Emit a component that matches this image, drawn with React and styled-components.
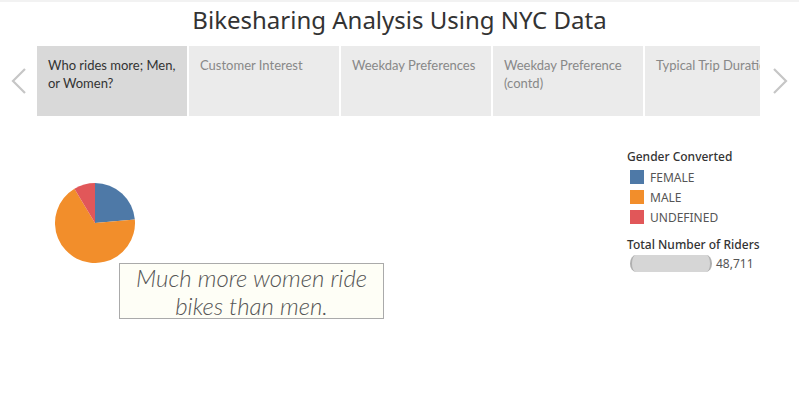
import React from 'react'
import styled, { createGlobalStyle } from 'styled-components'

const GlobalStyle = createGlobalStyle`
  body {
    margin: 0;
    background: #fff;
    font-family: "Noto Sans", "Open Sans", sans-serif;
  }
`

const Page = styled.div`
  width: 799px;
  height: 412px;
  overflow: hidden;
  display: flex;
  flex-direction: column;
`

const TopStrip = styled.div`
  height: 2px;
  background: #f2f2f2;
`

const Title = styled.h1`
  margin: 0 0 8px;
  height: 36px;
  line-height: 36px;
  text-align: center;
  font-size: 24px;
  font-weight: 400;
  color: #333;
`

const StoryNav = styled.div`
  display: flex;
  align-items: center;
  height: 70px;
`

const Arrow = styled.div`
  width: ${p => p.$w}px;
  display: flex;
  justify-content: center;
  color: #c6c6c6;
`

const Track = styled.div`
  width: 723px;
  height: 70px;
  overflow: hidden;
  display: flex;
  gap: 2px;
`

const StoryPoint = styled.div`
  flex: 0 0 150px;
  box-sizing: border-box;
  padding: 10px 3px 0 11px;
  background: ${p => (p.$active ? '#d9d9d9' : '#ebebeb')};
  color: ${p => (p.$active ? '#333' : '#888')};
  font-family: Lato, "Noto Sans", sans-serif;
  font-size: 13px;
  line-height: 18px;
  white-space: ${p => (p.$clip ? 'nowrap' : 'normal')};
  overflow: hidden;
`

const Content = styled.div`
  position: relative;
  flex: 1;
  display: flex;
  justify-content: space-between;
`

const ChartArea = styled.div`
  padding: 67px 0 0 55px;
`

const Annotation = styled.div`
  position: absolute;
  left: 119px;
  top: 147px;
  width: 265px;
  height: 56px;
  box-sizing: border-box;
  border: 1px solid #aaa;
  background: #fefef6;
  color: #555;
  font-family: Lato, "Noto Sans", sans-serif;
  font-size: 24px;
  font-style: italic;
  font-weight: 300;
  line-height: 28px;
  text-align: center;
`

const Legend = styled.div`
  width: 172px;
  padding-top: 33px;
  display: flex;
  flex-direction: column;
`

const LegendTitle = styled.div`
  font-size: 12px;
  font-weight: 500;
  color: #333;
  line-height: 16px;
  margin-top: ${p => p.$mt || 0}px;
  margin-bottom: 2px;
`

const LegendItem = styled.div`
  display: flex;
  align-items: center;
  gap: 6px;
  height: 20px;
  padding-left: 3px;
  font-size: 12px;
  color: #555;
`

const Swatch = styled.span`
  width: 14px;
  height: 14px;
  background: ${p => p.$color};
`

const SizeRow = styled.div`
  display: flex;
  align-items: center;
  gap: 4px;
  padding-left: 3px;
  font-size: 12px;
  color: #555;
`

const SizeBar = styled.span`
  width: 78px;
  height: 17px;
  background: #d6d6d6;
  border-left: 2px solid #b0b0b0;
  border-right: 2px solid #b0b0b0;
  border-radius: 6px / 50%;
`

const slices = [
  { color: '#4e79a7', from: 0, to: 85 },
  { color: '#f28e2b', from: 85, to: 329 },
  { color: '#e15759', from: 329, to: 360 },
]

const pt = (deg, r) => {
  const a = ((deg - 90) * Math.PI) / 180
  return [40 + r * Math.cos(a), 40 + r * Math.sin(a)]
}

const Pie = () => (
  <svg width="80" height="80" viewBox="0 0 80 80">
    {slices.map(s => {
      const [x1, y1] = pt(s.from, 40)
      const [x2, y2] = pt(s.to, 40)
      const large = s.to - s.from > 180 ? 1 : 0
      return (
        <path
          key={s.color}
          d={`M40 40 L${x1} ${y1} A40 40 0 ${large} 1 ${x2} ${y2} Z`}
          fill={s.color}
        />
      )
    })}
  </svg>
)

const Chevron = ({ dir }) => (
  <svg width="16" height="26" viewBox="0 0 16 26">
    <path
      d={dir === 'left' ? 'M14 1 L2 13 L14 25' : 'M2 1 L14 13 L2 25'}
      fill="none"
      stroke="currentColor"
      strokeWidth="2.2"
    />
  </svg>
)

const points = [
  'Who rides more; Men, or Women?',
  'Customer Interest',
  'Weekday Preferences',
  'Weekday Preference (contd)',
  'Typical Trip Duration',
]

export default function App() {
  return (
    <Page>
      <GlobalStyle />
      <TopStrip />
      <Title>Bikesharing Analysis Using NYC Data</Title>
      <StoryNav>
        <Arrow $w={37}>
          <Chevron dir="left" />
        </Arrow>
        <Track>
          {points.map((p, i) => (
            <StoryPoint key={p} $active={i === 0} $clip={i === 4}>
              {p}
            </StoryPoint>
          ))}
        </Track>
        <Arrow $w={39}>
          <Chevron dir="right" />
        </Arrow>
      </StoryNav>
      <Content>
        <ChartArea>
          <Pie />
        </ChartArea>
        <Annotation>
          Much more women ride
          <br />
          bikes than men.
        </Annotation>
        <Legend>
          <LegendTitle>Gender Converted</LegendTitle>
          <LegendItem>
            <Swatch $color="#4e79a7" />
            FEMALE
          </LegendItem>
          <LegendItem>
            <Swatch $color="#f28e2b" />
            MALE
          </LegendItem>
          <LegendItem>
            <Swatch $color="#e15759" />
            UNDEFINED
          </LegendItem>
          <LegendTitle $mt={10}>Total Number of Riders</LegendTitle>
          <SizeRow>
            <SizeBar />
            48,711
          </SizeRow>
        </Legend>
      </Content>
    </Page>
  )
}
